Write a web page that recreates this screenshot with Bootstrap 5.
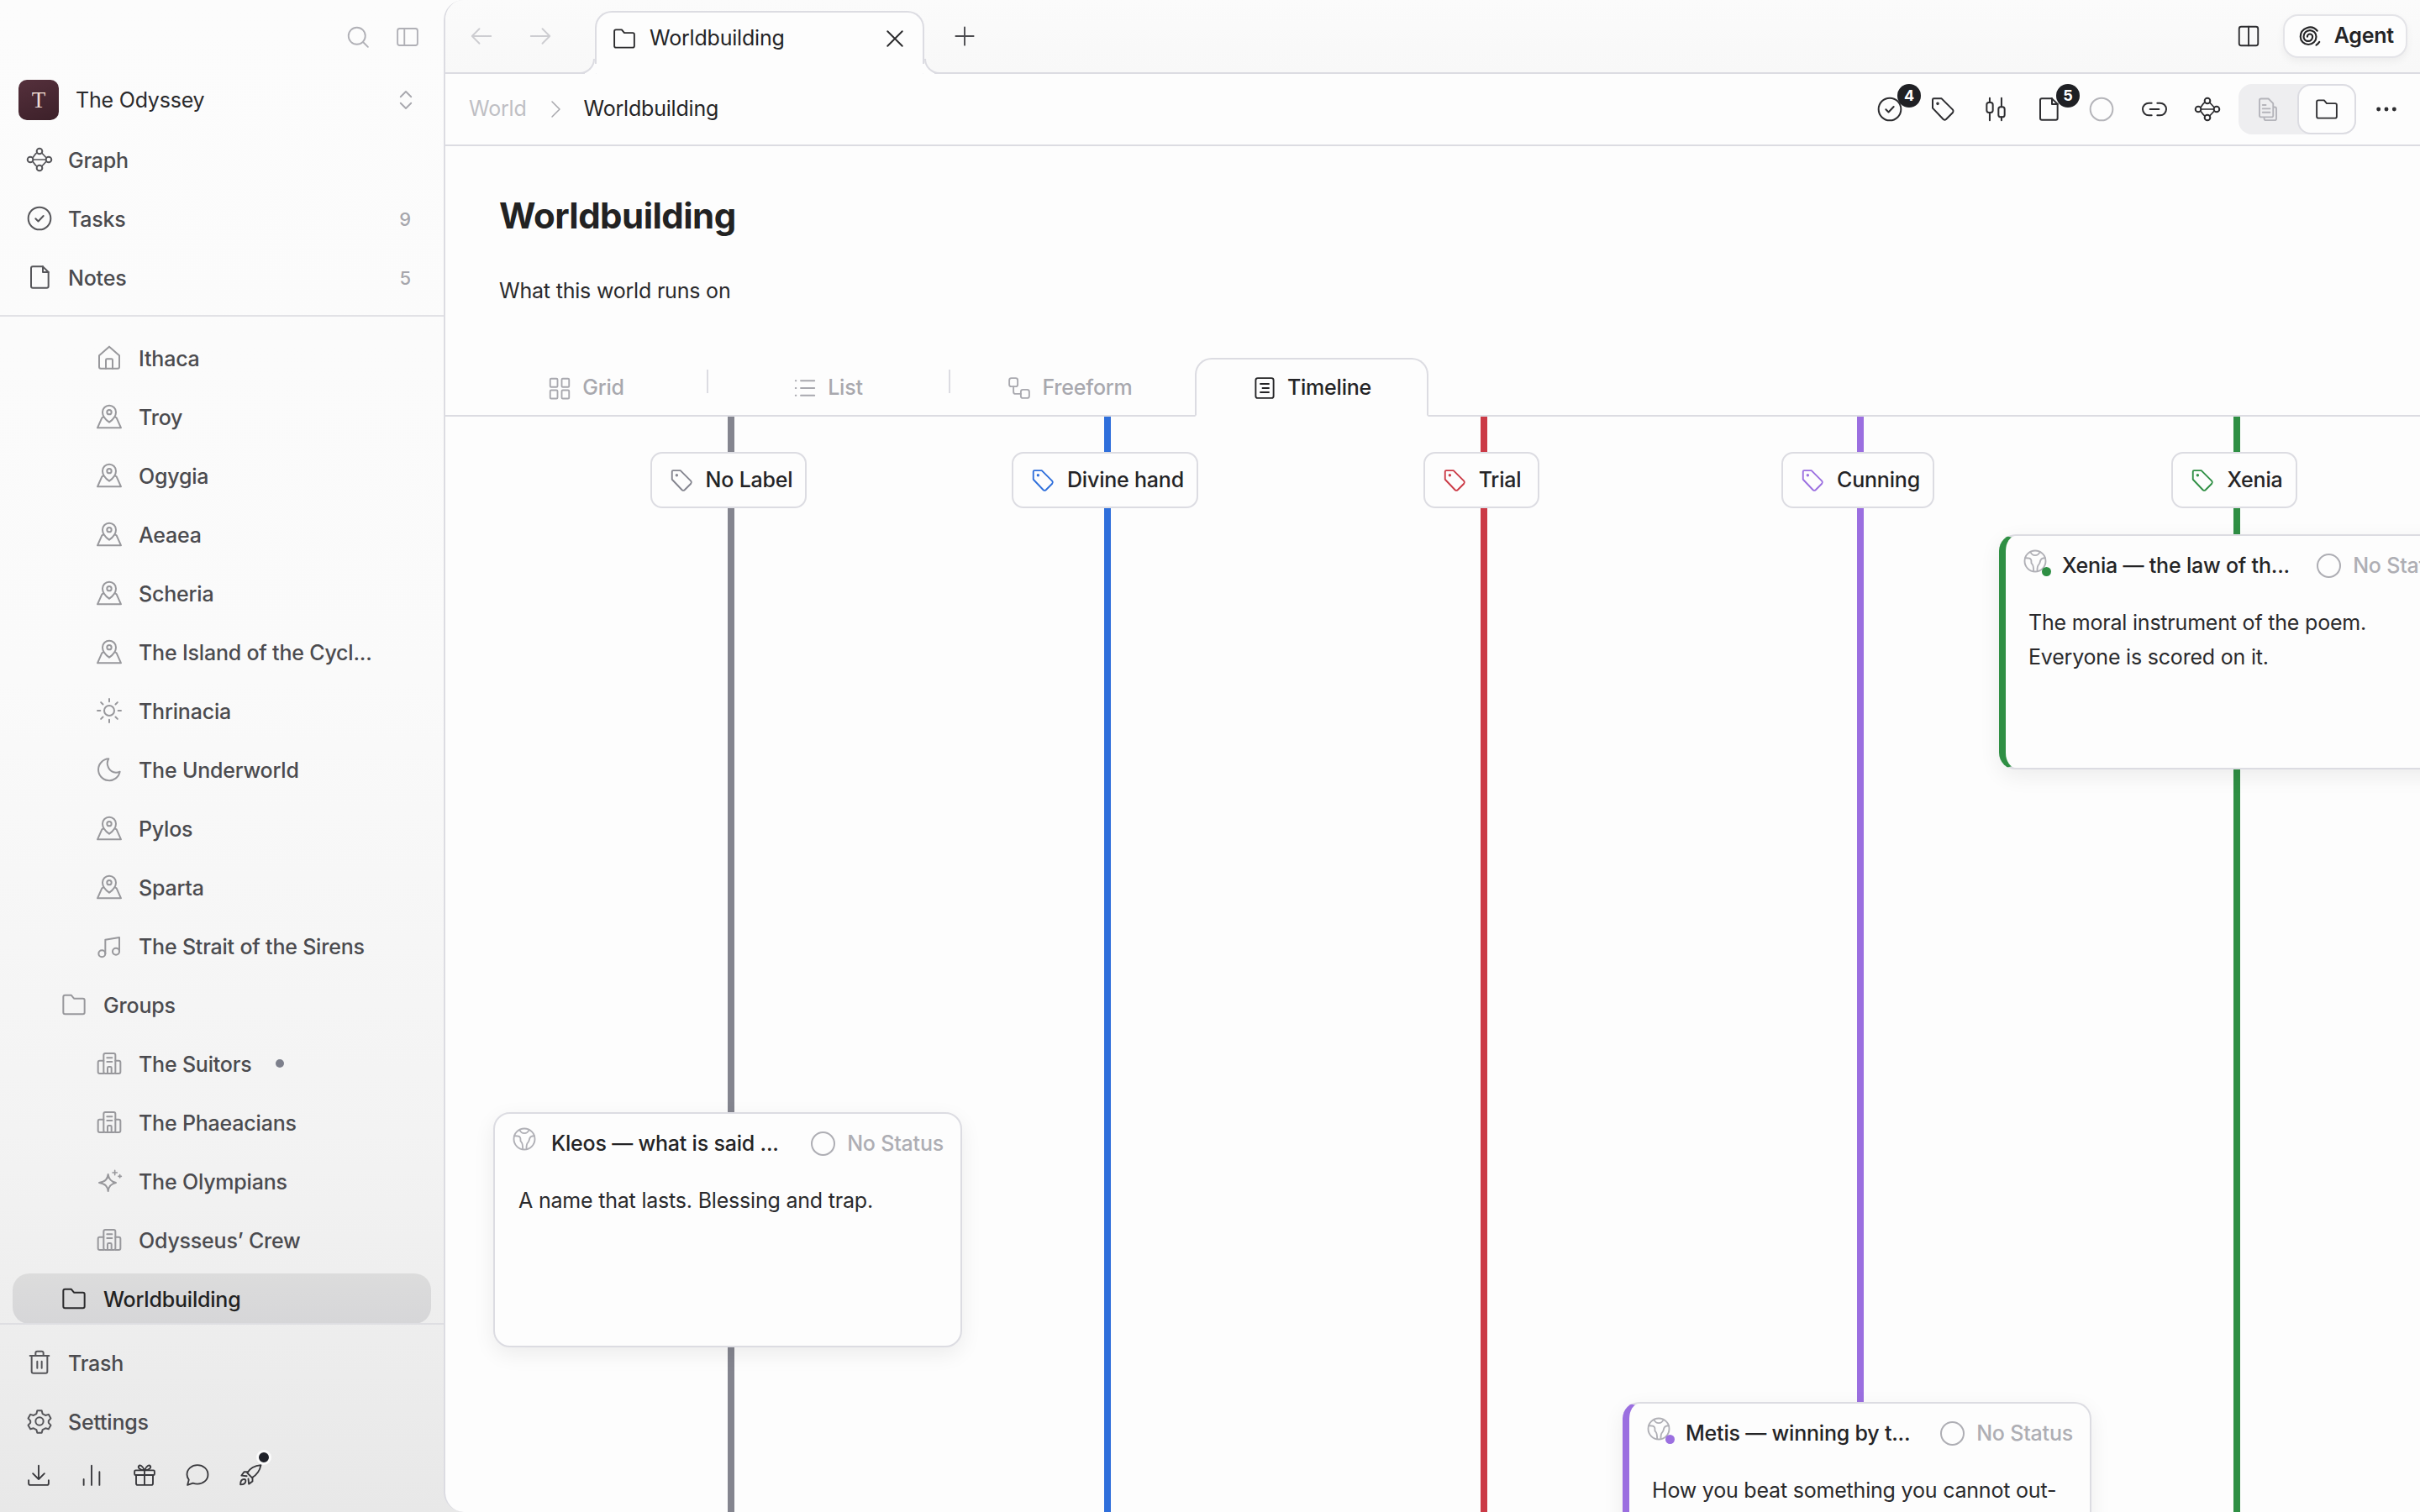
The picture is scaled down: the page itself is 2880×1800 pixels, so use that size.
<!DOCTYPE html>
<html lang="en">
<head>
  <meta charset="UTF-8"/>
  <meta name="viewport" content="width=device-width, initial-scale=1.0"/>
  <title>Worldbuilding</title>
  <link href="https://cdn.jsdelivr.net/npm/bootstrap@5.3.0/dist/css/bootstrap.min.css" rel="stylesheet"/>
  <style>
    html, body { height: 100%; }
    body {
      font-family: "Inter", "Liberation Sans", sans-serif;
      font-size: 25px;
      letter-spacing: -.2px;
      color: #242426;
      overflow: hidden;
      background: linear-gradient(180deg, #fcfcfc 0%, #fafafa 45%, #f3f3f3 75%, #e8e8e8 100%);
    }
    .ico { width: 30px; height: 30px; fill: none; stroke: currentColor; stroke-width: 1.5; stroke-linecap: round; stroke-linejoin: round; flex: none; }

    /* sidebar */
    .side { width: 528px; flex: none; height: 100vh; }
    .side-top { height: 377px; border-bottom: 2px solid #e2e2e6; flex: none; }
    .side-head { height: 88px; padding-right: 28px; gap: 29px; color: #b0b0b6; }
    .side-ws { height: 62px; margin-bottom: 10px; padding: 0 30px 0 22px; color: #2a2a2c; }
    .side-ws > span:nth-child(2) { padding-top: 2px; }
    .ws-logo { width: 48px; height: 48px; border-radius: 10px; background: linear-gradient(160deg, #55303c, #3c2029); color: #f1ddd3; font-family: "Liberation Serif", serif; font-size: 27px; margin-right: 20px; }
    .side-row { height: 60px; margin: 0 15px 10px 15px; padding-top: 3px; border-radius: 20px; color: #4b4b4f; font-weight: 450; white-space: nowrap; }
    .side-row .ico { width: 32px; height: 32px; margin-right: 19px; margin-top: -3px; color: #56565a; }
    .side-d0 { padding-left: 16px; padding-right: 24px; }
    .side-d0 .ico { margin-right: 18px; }
    .side-d1 { padding-left: 57px; }
    .side-d2 { padding-left: 99px; }
    .side-d1 .ico, .side-d2 .ico { color: #98989c; }
    .side-count { margin-left: auto; font-size: 22px; color: #a6a6ac; }
    .side-dot { width: 10px; height: 10px; border-radius: 50%; background: #7d808c; margin-left: 28px; margin-top: -4px; }
    .side-sel { background: linear-gradient(180deg, #dcdcdc, #d6d6d8); color: #222; font-weight: 550; }
    .side-sel .ico { color: #2a2a2c; }
    .side-list { padding-top: 19px; min-height: 0; overflow: hidden; }
    .side-foot { height: 225px; flex: none; border-top: 2px solid #dedee2; padding-top: 15px; }
    .side-tools { padding-left: 14px; margin-top: 14px; color: #38383c; }
    .side-tool { width: 63px; height: 40px; }
    .rocket-dot { position: absolute; top: -10px; left: 39px; width: 12px; height: 12px; border-radius: 50%; background: #20222a; border: 3px solid #fbfbfb; box-sizing: content-box; }

    /* main panel */
    .panel { background: #fdfdfd; border-left: 2px solid #dcdce2; border-radius: 24px 0 0 24px; height: 100vh; min-width: 0; overflow: hidden; }
    .tabstrip { height: 88px; flex: none; border-bottom: 2px solid #dcdce2; background: linear-gradient(180deg, #fbfbfb, #f8f8f8); padding: 0 15px 0 0; }
    .nav-arrow { width: 70px; color: #cdcdd1; }
    .nav-first { margin-left: 8px; }
    .tab-btn { position: relative; width: 392px; height: 75px; margin: 13px 0 -2px 30px; padding: 0 18px 12px 18px; background: #fdfdfd; border: 2px solid #dcdce2; border-bottom: 0; border-radius: 20px 20px 0 0; }
    .tab-btn .ico { color: #2a2a2c; }
    .tab-btn::before, .tab-btn::after { content: ""; position: absolute; bottom: 0; width: 18px; height: 18px; }
    .tab-btn::before { left: -20px; border-right: 2px solid #dcdce2; border-bottom: 2px solid #dcdce2; border-bottom-right-radius: 18px; box-shadow: 6px 6px 0 #fdfdfd; }
    .tab-btn::after { right: -20px; border-left: 2px solid #dcdce2; border-bottom: 2px solid #dcdce2; border-bottom-left-radius: 18px; box-shadow: -6px 6px 0 #fdfdfd; }
    .tab-name { margin-left: 15px; }
    .tab-add { margin-left: 33px; color: #4a4a4e; }
    .agent-btn { height: 52px; padding: 0 14px 0 15px; border: 2px solid #e4e4e8; border-radius: 18px; background: #fdfdfd; font-size: 25px; font-weight: 600; letter-spacing: -.2px; color: #242426; box-shadow: 0 4px 10px rgba(0,0,0,.05); gap: 14px; margin-left: 26px; }
    .agent-btn:hover { background: #fdfdfd; color: #242426; border-color: #e4e4e8; }
    .crumbbar { height: 86px; flex: none; border-bottom: 2px solid #dcdce2; padding: 0 9px 0 28px; }
    .crumb-off { color: #bfbfc4; }
    .crumb-sep { color: #a8a8ad; width: 24px; height: 24px; margin: 0 22px; }
    .tool-box { position: relative; width: 63px; height: 60px; color: #2d2d30; }
    .tool-box .ico { width: 32px; height: 32px; }
    .tool-off { color: #b5b5ba; }
    .tool-badge { position: absolute; top: 0; left: 41px; width: 28px; height: 28px; padding: 0; border-radius: 50%; background: #1f2024; color: #fff; font-size: 18px; font-weight: 700; line-height: 28px; letter-spacing: 0; }
    .seg { width: 140px; height: 60px; margin-left: 6px; background: #eeeef0; border-radius: 16px; }
    .seg-off { width: 70px; color: #b4b4ba; }
    .seg-on { width: 70px; height: 60px; margin-right: -1px; background: #fdfdfd; border: 2px solid #dcdce2; border-radius: 16px; color: #2d2d30; }
    .page-title { margin: 0; padding: 53px 0 0 64px; font-size: 42px; font-weight: 650; letter-spacing: -.55px; line-height: 60px; color: #222; }
    .page-sub { margin: 0; padding: 39px 0 0 64px; line-height: 40px; color: #2a2a2c; }

    .view-tabs { margin-top: 60px; padding-left: 28px; gap: 10px; border-bottom: 2px solid #dcdce2; flex: none; height: 70px; flex-wrap: nowrap; }
    .view-tabs .nav-item { position: relative; width: 278px; }
    .view-tabs .nav-link { height: 70px; margin: 0; padding: 2px 0 0; border: 2px solid transparent; color: #a8a8ae; gap: 12px; font-size: 25px; font-weight: 450; border-radius: 20px 20px 0 0; }
    .view-tabs .nav-link.active { background: #fdfdfd; color: #242426; border-color: #dcdce2 #dcdce2 #fdfdfd; }
    .view-sep::after { content: ""; position: absolute; right: -7px; top: 14px; height: 28px; width: 2px; background: #dcdce2; }

    /* timeline */
    .tl { position: relative; padding-left: 114px; min-height: 0; overflow: hidden; }
    .tl-lane { position: relative; width: 448px; flex: none; }
    .tl-lane::before { content: ""; position: absolute; top: 0; bottom: 0; left: 222px; width: 8px; background: var(--tone); }
    .tl-chip { position: relative; height: 67px; margin-top: 42px; margin-right: 2px; padding: 0 15px 0 20px; gap: 14px; background: #fdfdfd; border: 2px solid #dcdce2; border-radius: 14px; font-weight: 500; }
    .tl-chip .ico { color: var(--tone); }
    .tl-chip-wide { padding-right: 20px; }
    .tl-card { position: absolute; width: 558px; height: 280px; background: #fdfdfd; border: 2px solid #dcdce2; border-radius: 20px; box-shadow: 0 8px 26px rgba(0,0,0,.07); padding: 0; }
    .tl-card-tone { border-left: 8px solid var(--tone); }
    .tl-head { height: 71px; padding: 0 20px 0 20px; margin-top: 0; white-space: nowrap; }
    .tl-globe { position: relative; margin-right: 17px; margin-top: -12px; color: #b0b0b6; }
    .tl-globe .ico { display: block; }
    .tl-pin { position: absolute; right: -4px; bottom: -3px; width: 11px; height: 11px; border-radius: 50%; background: var(--tone); }
    .tl-name { font-weight: 500; }
    .tl-state { margin-left: auto; color: #aeaeb4; font-weight: 500; gap: 14px; }
    .tl-ring { width: 29px; height: 29px; border: 2px solid #aeaeb4; border-radius: 50%; }
    .tl-body { margin: 12px 0 0; padding: 0 20px 0 28px; line-height: 40.5px; color: #2a2a2c; }
    .tl-card-tone .tl-body { padding-left: 27px; }
  </style>
</head>
<body class="d-flex">

<svg width="0" height="0" class="position-absolute">
  <symbol id="i-search" viewBox="0 0 24 24"><circle cx="11" cy="11" r="8"/><path d="M17 17l4.500 4.500"/></symbol>
  <symbol id="i-panel" viewBox="0 0 24 24"><rect x="2.500" y="4" width="19" height="16" rx="2"/><path d="M9 4v16"/></symbol>
  <symbol id="i-updown" viewBox="0 0 24 24"><path d="M7 9l5-5 5 5M7 15l5 5 5-5"/></symbol>
  <symbol id="i-graph" viewBox="0 0 24 24"><circle cx="12" cy="4.500" r="2.500"/><circle cx="12" cy="19.500" r="2.500"/><circle cx="3.800" cy="12" r="2.500"/><circle cx="20.200" cy="12" r="2.500"/><path d="M6.300 12h11.400M9.800 5.800C8 7 7 9 6 10.300M9.800 18.200C8 17 7 15 6 13.700M14 6l4 4.300M14 18l4-4.300" stroke-width="1.300"/></symbol>
  <symbol id="i-check" viewBox="0 0 24 24"><circle cx="12" cy="12" r="10"/><path d="M8.500 12.200l2.400 2.400 4.600-4.800"/></symbol>
  <symbol id="i-doc" viewBox="0 0 24 24"><path d="M4.500 4a1.500 1.500 0 0 1 1.500-1.500h9L20 7.500V20a1.500 1.500 0 0 1-1.500 1.500H6A1.500 1.500 0 0 1 4.500 20z"/><path d="M15 2.500v5h5"/></symbol>
  <symbol id="i-home" viewBox="0 0 24 24"><path d="M3 10L12 2l9 8v10a1.500 1.500 0 0 1-1.500 1.500h-15A1.500 1.500 0 0 1 3 20z"/><path d="M9 21.500V14a1 1 0 0 1 1-1h4a1 1 0 0 1 1 1v7.500"/></symbol>
  <symbol id="i-pin" viewBox="0 0 24 24"><path d="M12 17c-3.500-2.500-6-5.200-6-9a6 6 0 0 1 12 0c0 3.800-2.500 6.500-6 9z"/><circle cx="12" cy="8" r="2"/><path d="M6.500 12.500L5.500 13l-4 9h21l-4-9-1-.5"/></symbol>
  <symbol id="i-sun" viewBox="0 0 24 24"><circle cx="12" cy="12" r="4.500"/><path d="M12 1.500v2.500M12 20v2.500M1.500 12H4M20 12h2.500M4.600 4.600l1.800 1.800M17.600 17.600l1.800 1.800M4.600 19.400l1.800-1.800M17.600 6.400l1.800-1.800"/></symbol>
  <symbol id="i-moon" viewBox="0 0 24 24"><path d="M11.500 2.500a9.700 9.700 0 1 0 10 11.500c-1.200.6-2.400.8-3.500.8A8.200 8.200 0 0 1 11.500 2.500z"/></symbol>
  <symbol id="i-music" viewBox="0 0 24 24"><circle cx="5.500" cy="19" r="3"/><circle cx="18" cy="17" r="3"/><path d="M8.500 19V6.500L21 4.500V17"/></symbol>
  <symbol id="i-folder" viewBox="0 0 24 24"><path d="M2.500 5a1.500 1.500 0 0 1 1.500-1.500h5.500L12 6.500h8A1.500 1.500 0 0 1 21.500 8v11a1.500 1.500 0 0 1-1.500 1.500H4A1.500 1.500 0 0 1 2.500 19z"/></symbol>
  <symbol id="i-building" viewBox="0 0 24 24"><rect x="7" y="3" width="10.500" height="18" rx="1.500"/><path d="M7 9.500H3.500A1.500 1.500 0 0 0 2 11v8.500A1.500 1.500 0 0 0 3.500 21H7M17.500 9.500h3A1.500 1.500 0 0 1 22 11v8.500a1.500 1.500 0 0 1-1.500 1.500h-3M10 7h4.500M10 10.500h4.500M10.500 21v-5a1 1 0 0 1 1-1h1.500a1 1 0 0 1 1 1v5"/></symbol>
  <symbol id="i-spark" viewBox="0 0 24 24"><path d="M11 6c.6 4.500 2.500 6.500 7 7.500-4.500 1-6.400 3-7 7.500-.6-4.500-2.500-6.500-8-7.500 5.500-1 7.400-3 8-7.500z"/><path d="M17 2.500v4M15 4.500h4M21.500 6.500v2.500M20.200 7.800h2.600" stroke-width="1.200"/></symbol>
  <symbol id="i-trash" viewBox="0 0 24 24"><path d="M3.500 6h17M5 6v14a1.500 1.500 0 0 0 1.500 1.500h11A1.500 1.500 0 0 0 19 20V6M8.500 6V3.500A1.500 1.500 0 0 1 10 2h4a1.500 1.500 0 0 1 1.500 1.500V6M10 11v6M14 11v6"/></symbol>
  <symbol id="i-gear" viewBox="0 0 24 24"><circle cx="12" cy="12" r="3.500"/><path d="M10 2.500h4l.7 2.800 2.600 1.400 2.800-.8 2 3.500-2 2.100v1.900l2 2.100-2 3.500-2.800-.8-2.600 1.400-.7 2.800h-4l-.7-2.800-2.600-1.400-2.800.8-2-3.500 2-2.100v-1.900l-2-2.100 2-3.500 2.800.8 2.600-1.400z"/></symbol>
  <symbol id="i-down" viewBox="0 0 24 24"><path d="M12 3v13M6.500 10.500L12 16l5.500-5.500M2.500 17v3A1.500 1.500 0 0 0 4 21.500h16a1.500 1.500 0 0 0 1.500-1.500v-3"/></symbol>
  <symbol id="i-bars" viewBox="0 0 24 24"><path d="M4.500 16v5.500M12 3v18.500M19.500 9v12.500"/></symbol>
  <symbol id="i-gift" viewBox="0 0 24 24"><rect x="2.500" y="7.500" width="19" height="4.500" rx="1"/><path d="M4 12v8a1.500 1.500 0 0 0 1.500 1.500h13A1.500 1.500 0 0 0 20 20v-8M12 7.500v14M12 7.500C10 3 7.500 2 6.500 3.500S7.500 7.500 12 7.500zM12 7.500C14 3 16.500 2 17.500 3.500S16.500 7.500 12 7.500z"/></symbol>
  <symbol id="i-chat" viewBox="0 0 24 24"><path d="M12 2.500c5.500 0 10 3.900 10 9s-4.500 9-10 9c-1.500 0-3-.3-4.300-.8L2.500 21.500l1.300-5A8.500 8.500 0 0 1 2 11.500c0-5.100 4.500-9 10-9z"/></symbol>
  <symbol id="i-rocket" viewBox="0 0 24 24"><path d="M22 2.500c-6 .5-10.500 3-13 7.500l4.500 4.500c4.500-2.500 7.500-7 8.500-12z"/><path d="M9.500 9H6l-2.500 3.500 5 .5M14 14.500V18l-3.500 2.500-.5-5M6 16c-2 0-3.500 1.500-3.500 5 3.500 0 5-1.500 5-3.500 0-1-.7-1.500-1.500-1.500z"/></symbol>
  <symbol id="i-left" viewBox="0 0 24 24"><path d="M21 12H3M10 5l-7 7 7 7"/></symbol>
  <symbol id="i-right" viewBox="0 0 24 24"><path d="M3 12h18M14 5l7 7-7 7"/></symbol>
  <symbol id="i-x" viewBox="0 0 24 24"><path d="M5 5l14 14M19 5L5 19"/></symbol>
  <symbol id="i-plus" viewBox="0 0 24 24"><path d="M12 3.500v17M3.500 12h17"/></symbol>
  <symbol id="i-split" viewBox="0 0 24 24"><rect x="3" y="3" width="18" height="18" rx="2"/><path d="M12 3v18"/></symbol>
  <symbol id="i-spiral" viewBox="0 0 24 24"><path d="M9.500 12.500a2.500 2.500 0 0 1 5 0 4.250 4.250 0 0 1-8.500 0 6 6 0 0 1 12 0 7.500 7.500 0 0 1-15 0 9 9 0 0 1 16-5.500M21 17.500a10 10 0 0 1-3 3" stroke-width="1.700"/></symbol>
  <symbol id="i-chev" viewBox="0 0 24 24"><path d="M8 3l9 9-9 9"/></symbol>
  <symbol id="i-tag" viewBox="0 0 24 24"><path d="M3 3.500A1 1 0 0 1 4 2.500h7l10 10a2 2 0 0 1 0 2.500l-6 6a2 2 0 0 1-2.500 0L3 11z"/><circle cx="7.500" cy="7" r=".6"/></symbol>
  <symbol id="i-slide" viewBox="0 0 24 24"><rect x="4" y="6" width="5.500" height="9" rx="2"/><rect x="14.500" y="10" width="5.500" height="9" rx="2"/><path d="M6.700 2v4M6.700 15v7M17.200 2v8M17.200 19v3"/></symbol>
  <symbol id="i-link" viewBox="0 0 24 24"><path d="M9.500 6.500H7a5.500 5.500 0 0 0 0 11h2.500M14.500 6.500H17a5.500 5.500 0 0 1 0 11h-2.500M8 12h8"/></symbol>
  <symbol id="i-copy" viewBox="0 0 24 24"><path d="M4 3.500A1.500 1.500 0 0 1 5.500 2h7L17 6.500V18a1.500 1.500 0 0 1-1.500 1.500h-10A1.500 1.500 0 0 1 4 18z"/><path d="M7 8h3M7 11.500h7M7 15h7"/><path d="M17.500 10h1A1.500 1.500 0 0 1 20 11.500V21a1.500 1.500 0 0 1-1.500 1.500H10A1.500 1.500 0 0 1 8.500 21v-1"/></symbol>
  <symbol id="i-more" viewBox="0 0 24 24"><circle cx="5" cy="12" r="1.100" fill="currentColor"/><circle cx="12" cy="12" r="1.100" fill="currentColor"/><circle cx="19" cy="12" r="1.100" fill="currentColor"/></symbol>
  <symbol id="i-grid" viewBox="0 0 24 24"><rect x="3" y="3" width="7" height="8" rx="1"/><rect x="14" y="3" width="7" height="8" rx="1"/><rect x="3" y="14" width="7" height="8" rx="1"/><rect x="14" y="14" width="7" height="8" rx="1"/></symbol>
  <symbol id="i-list" viewBox="0 0 24 24"><path d="M8 5h13M8 12h13M8 19h13M3 5h.5M3 12h.5M3 19h.5"/></symbol>
  <symbol id="i-free" viewBox="0 0 24 24"><rect x="2.500" y="2.500" width="8" height="8" rx="2"/><rect x="13.500" y="13.500" width="8" height="8" rx="2"/><path d="M6.500 10.500v5a2 2 0 0 0 2 2h5"/></symbol>
  <symbol id="i-time" viewBox="0 0 24 24"><rect x="3.500" y="2.500" width="17" height="19" rx="2"/><path d="M8 8h8M10 12h6M8 16h8"/></symbol>
  <symbol id="i-globe" viewBox="0 0 24 24"><circle cx="12" cy="12" r="10"/><path d="M2.500 9c2 0 4.500-.2 5.500 1.500s-.5 3 1 4.200 1.500 3 1.500 6.800M21.500 9c-2 0-4 .8-4.500 2.500s-.5 3-1.700 4-1.300 3-1.300 5.500M7.500 3.200c.8 2 2.500 3.300 4.500 3.300s3.700-1.300 4.500-3.300"/></symbol>
</svg>

<aside class="side d-flex flex-column">
  <div class="side-top">
    <div class="side-head d-flex align-items-center justify-content-end">
      <svg class="ico"><use href="#i-search"/></svg>
      <svg class="ico"><use href="#i-panel"/></svg>
    </div>
    <div class="side-ws d-flex align-items-center">
      <span class="ws-logo d-flex align-items-center justify-content-center">T</span>
      <span>The Odyssey</span>
      <svg class="ico ms-auto" style="color:#a8a8ae"><use href="#i-updown"/></svg>
    </div>
    <div class="side-row side-d0 d-flex align-items-center"><svg class="ico"><use href="#i-graph"/></svg>Graph</div>
    <div class="side-row side-d0 d-flex align-items-center"><svg class="ico"><use href="#i-check"/></svg>Tasks<span class="side-count">9</span></div>
    <div class="side-row side-d0 d-flex align-items-center"><svg class="ico"><use href="#i-doc"/></svg>Notes<span class="side-count">5</span></div>
  </div>

  <div class="side-list flex-grow-1">
    <div class="side-row side-d2 d-flex align-items-center"><svg class="ico"><use href="#i-home"/></svg>Ithaca</div>
    <div class="side-row side-d2 d-flex align-items-center"><svg class="ico"><use href="#i-pin"/></svg>Troy</div>
    <div class="side-row side-d2 d-flex align-items-center"><svg class="ico"><use href="#i-pin"/></svg>Ogygia</div>
    <div class="side-row side-d2 d-flex align-items-center"><svg class="ico"><use href="#i-pin"/></svg>Aeaea</div>
    <div class="side-row side-d2 d-flex align-items-center"><svg class="ico"><use href="#i-pin"/></svg>Scheria</div>
    <div class="side-row side-d2 d-flex align-items-center"><svg class="ico"><use href="#i-pin"/></svg>The Island of the Cycl...</div>
    <div class="side-row side-d2 d-flex align-items-center"><svg class="ico"><use href="#i-sun"/></svg>Thrinacia</div>
    <div class="side-row side-d2 d-flex align-items-center"><svg class="ico"><use href="#i-moon"/></svg>The Underworld</div>
    <div class="side-row side-d2 d-flex align-items-center"><svg class="ico"><use href="#i-pin"/></svg>Pylos</div>
    <div class="side-row side-d2 d-flex align-items-center"><svg class="ico"><use href="#i-pin"/></svg>Sparta</div>
    <div class="side-row side-d2 d-flex align-items-center"><svg class="ico"><use href="#i-music"/></svg>The Strait of the Sirens</div>
    <div class="side-row side-d1 d-flex align-items-center"><svg class="ico"><use href="#i-folder"/></svg>Groups</div>
    <div class="side-row side-d2 d-flex align-items-center"><svg class="ico"><use href="#i-building"/></svg>The Suitors<span class="side-dot"></span></div>
    <div class="side-row side-d2 d-flex align-items-center"><svg class="ico"><use href="#i-building"/></svg>The Phaeacians</div>
    <div class="side-row side-d2 d-flex align-items-center"><svg class="ico"><use href="#i-spark"/></svg>The Olympians</div>
    <div class="side-row side-d2 d-flex align-items-center"><svg class="ico"><use href="#i-building"/></svg>Odysseus’ Crew</div>
    <div class="side-row side-d1 side-sel d-flex align-items-center"><svg class="ico"><use href="#i-folder"/></svg>Worldbuilding</div>
  </div>

  <div class="side-foot">
    <div class="side-row side-d0 d-flex align-items-center"><svg class="ico"><use href="#i-trash"/></svg>Trash</div>
    <div class="side-row side-d0 d-flex align-items-center"><svg class="ico"><use href="#i-gear"/></svg>Settings</div>
    <div class="side-tools d-flex align-items-center">
      <span class="side-tool d-flex align-items-center justify-content-center"><svg class="ico"><use href="#i-down"/></svg></span>
      <span class="side-tool d-flex align-items-center justify-content-center"><svg class="ico"><use href="#i-bars"/></svg></span>
      <span class="side-tool d-flex align-items-center justify-content-center"><svg class="ico"><use href="#i-gift"/></svg></span>
      <span class="side-tool d-flex align-items-center justify-content-center"><svg class="ico"><use href="#i-chat"/></svg></span>
      <span class="side-tool d-flex align-items-center justify-content-center position-relative"><svg class="ico"><use href="#i-rocket"/></svg><span class="rocket-dot"></span></span>
    </div>
  </div>
</aside>

<main class="panel flex-grow-1 d-flex flex-column">
  <div class="tabstrip d-flex align-items-center">
    <span class="nav-arrow nav-first d-flex justify-content-center"><svg class="ico"><use href="#i-left"/></svg></span>
    <span class="nav-arrow d-flex justify-content-center"><svg class="ico"><use href="#i-right"/></svg></span>
    <div class="tab-btn d-flex align-items-center">
      <svg class="ico"><use href="#i-folder"/></svg>
      <span class="tab-name">Worldbuilding</span>
      <svg class="ico ms-auto"><use href="#i-x"/></svg>
    </div>
    <svg class="ico tab-add"><use href="#i-plus"/></svg>
    <svg class="ico ms-auto" style="color:#2d2d30"><use href="#i-split"/></svg>
    <button type="button" class="btn agent-btn d-flex align-items-center"><svg class="ico"><use href="#i-spiral"/></svg>Agent</button>
  </div>

  <div class="crumbbar d-flex align-items-center">
    <span class="crumb-off">World</span>
    <svg class="ico crumb-sep"><use href="#i-chev"/></svg>
    <span>Worldbuilding</span>
    <div class="ms-auto d-flex align-items-center">
      <span class="tool-box d-flex align-items-center justify-content-center"><svg class="ico"><use href="#i-check"/></svg><span class="badge tool-badge">4</span></span>
      <span class="tool-box d-flex align-items-center justify-content-center"><svg class="ico"><use href="#i-tag"/></svg></span>
      <span class="tool-box d-flex align-items-center justify-content-center"><svg class="ico"><use href="#i-slide"/></svg></span>
      <span class="tool-box d-flex align-items-center justify-content-center"><svg class="ico"><use href="#i-doc"/></svg><span class="badge tool-badge">5</span></span>
      <span class="tool-box tool-off d-flex align-items-center justify-content-center"><svg class="ico" viewBox="0 0 24 24"><circle cx="12" cy="12" r="10"/></svg></span>
      <span class="tool-box d-flex align-items-center justify-content-center"><svg class="ico"><use href="#i-link"/></svg></span>
      <span class="tool-box d-flex align-items-center justify-content-center"><svg class="ico"><use href="#i-graph"/></svg></span>
      <div class="seg d-flex align-items-center">
        <span class="seg-off d-flex justify-content-center"><svg class="ico"><use href="#i-copy"/></svg></span>
        <span class="seg-on d-flex align-items-center justify-content-center"><svg class="ico"><use href="#i-folder"/></svg></span>
      </div>
      <span class="tool-box d-flex align-items-center justify-content-center ms-1"><svg class="ico"><use href="#i-more"/></svg></span>
    </div>
  </div>

  <h1 class="page-title">Worldbuilding</h1>
  <p class="page-sub">What this world runs on</p>

  <ul class="nav nav-tabs view-tabs">
    <li class="nav-item view-sep"><a class="nav-link d-flex align-items-center justify-content-center" href="#"><svg class="ico"><use href="#i-grid"/></svg>Grid</a></li>
    <li class="nav-item view-sep"><a class="nav-link d-flex align-items-center justify-content-center" href="#"><svg class="ico"><use href="#i-list"/></svg>List</a></li>
    <li class="nav-item"><a class="nav-link d-flex align-items-center justify-content-center" href="#"><svg class="ico"><use href="#i-free"/></svg>Freeform</a></li>
    <li class="nav-item"><a class="nav-link active d-flex align-items-center justify-content-center" href="#"><svg class="ico"><use href="#i-time"/></svg>Timeline</a></li>
  </ul>

  <div class="tl d-flex flex-grow-1">
    <section class="tl-lane d-flex flex-column align-items-center" style="--tone:#84858f">
      <div class="tl-chip d-flex align-items-center"><svg class="ico"><use href="#i-tag"/></svg>No Label</div>
      <article class="tl-card card" style="left:-57px;top:828px">
        <div class="tl-head d-flex align-items-center">
          <span class="tl-globe"><svg class="ico"><use href="#i-globe"/></svg></span>
          <span class="tl-name">Kleos — what is said ...</span>
          <span class="tl-state d-flex align-items-center"><span class="tl-ring"></span>No Status</span>
        </div>
        <p class="tl-body">A name that lasts. Blessing and trap.</p>
      </article>
    </section>
    <section class="tl-lane d-flex flex-column align-items-center" style="--tone:#2f6fdb">
      <div class="tl-chip d-flex align-items-center"><svg class="ico"><use href="#i-tag"/></svg>Divine hand</div>
    </section>
    <section class="tl-lane d-flex flex-column align-items-center" style="--tone:#cb3a46">
      <div class="tl-chip tl-chip-wide d-flex align-items-center"><svg class="ico"><use href="#i-tag"/></svg>Trial</div>
    </section>
    <section class="tl-lane d-flex flex-column align-items-center" style="--tone:#9b6fe0">
      <div class="tl-chip d-flex align-items-center"><svg class="ico"><use href="#i-tag"/></svg>Cunning</div>
      <article class="tl-card tl-card-tone card" style="left:-57px;top:1173px">
        <div class="tl-head d-flex align-items-center">
          <span class="tl-globe"><svg class="ico"><use href="#i-globe"/></svg><span class="tl-pin"></span></span>
          <span class="tl-name">Metis — winning by t...</span>
          <span class="tl-state d-flex align-items-center"><span class="tl-ring"></span>No Status</span>
        </div>
        <p class="tl-body">How you beat something you cannot out-</p>
      </article>
    </section>
    <section class="tl-lane d-flex flex-column align-items-center" style="--tone:#2f8f44">
      <div class="tl-chip d-flex align-items-center"><svg class="ico"><use href="#i-tag"/></svg>Xenia</div>
      <article class="tl-card tl-card-tone card" style="left:-57px;top:140px">
        <div class="tl-head d-flex align-items-center">
          <span class="tl-globe"><svg class="ico"><use href="#i-globe"/></svg><span class="tl-pin"></span></span>
          <span class="tl-name">Xenia — the law of th...</span>
          <span class="tl-state d-flex align-items-center"><span class="tl-ring"></span>No Status</span>
        </div>
        <p class="tl-body">The moral instrument of the poem. Everyone is scored on it.</p>
      </article>
    </section>
  </div>
</main>

<script src="https://cdn.jsdelivr.net/npm/bootstrap@5.3.0/dist/js/bootstrap.bundle.min.js"></script>
</body>
</html>
